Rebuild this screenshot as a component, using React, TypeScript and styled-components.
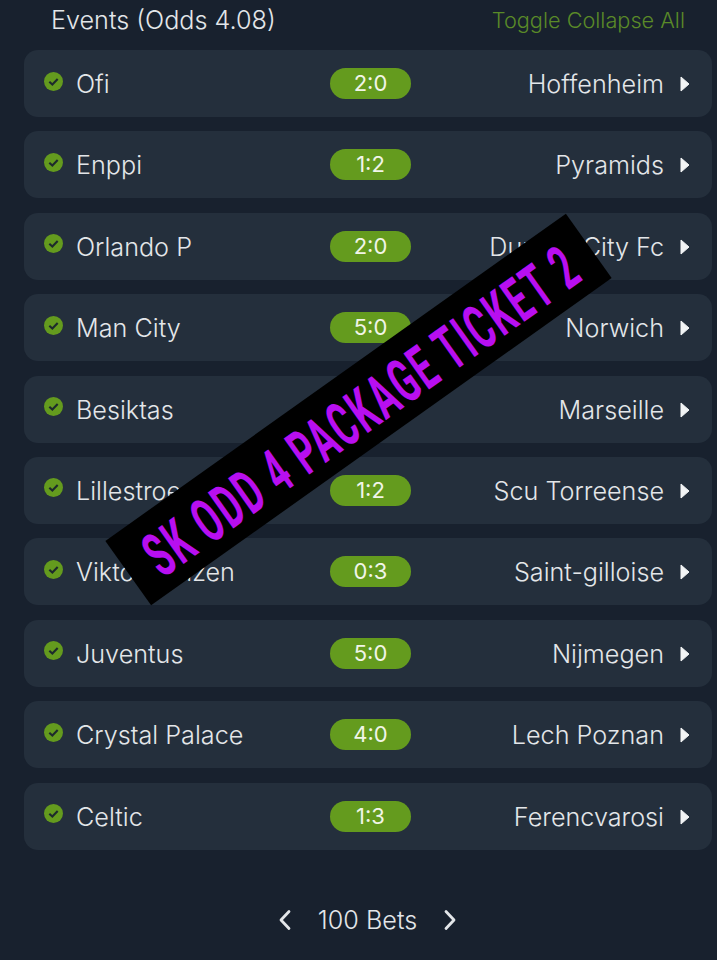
import styled, { createGlobalStyle } from "styled-components";

const GlobalStyle = createGlobalStyle`
  html, body {
    margin: 0;
    padding: 0;
    background: #18212e;
  }
  body {
    font-family: Inter, "Liberation Sans", sans-serif;
  }
`;

const Page = styled.div`
  position: relative;
  width: 717px;
  height: 960px;
  overflow: hidden;
  background: #18212e;
  color: #e3e6e9;
`;

const Header = styled.div`
  height: 50px;
  box-sizing: border-box;
  padding: 4px 32px 0 51px;
  display: flex;
  justify-content: space-between;
  align-items: flex-start;
`;

const Title = styled.div`
  font-size: 25.2px;
  font-weight: 300;
  line-height: 32px;
`;

const Toggle = styled.div`
  font-size: 21.7px;
  font-weight: 300;
  line-height: 32px;
  color: #5a8a28;
`;

const List = styled.div`
  display: flex;
  flex-direction: column;
  gap: 14.4px;
  margin: 0 5px 0 24px;
`;

const Row = styled.div`
  height: 67px;
  box-sizing: border-box;
  padding: 1px 15px 0 20px;
  border-radius: 14px;
  background: #242f3c;
  display: grid;
  grid-template-columns: 1fr 81px 1fr;
  align-items: center;
  font-size: 25.2px;
  font-weight: 300;
`;

const Home = styled.div`
  display: flex;
  align-items: center;
  gap: 13px;
`;

const CheckIcon = styled.svg`
  width: 19px;
  height: 19px;
  margin-bottom: 6px;
  flex: none;
`;

const Score = styled.div`
  height: 31px;
  margin-top: -1px;
  border-radius: 16px;
  background: #649b1e;
  color: #f1f5e8;
  font-size: 22px;
  font-weight: 400;
  line-height: 31px;
  text-align: center;
`;

const Away = styled.div`
  display: flex;
  align-items: center;
  justify-content: flex-end;
  gap: 16px;
  padding-right: 6px;
`;

const Caret = styled.svg`
  width: 10px;
  height: 16px;
  flex: none;
  margin-right: 1px;
`;

const Pager = styled.div`
  margin-top: 52px;
  margin-left: 18px;
  display: flex;
  justify-content: center;
  align-items: center;
  gap: 26px;
  font-size: 25.2px;
  font-weight: 300;
  line-height: 36px;
`;

const Chevron = styled.svg`
  width: 14px;
  height: 22px;
  flex: none;
`;

const Banner = styled.div`
  position: absolute;
  left: 76px;
  top: 369.5px;
  width: 565px;
  height: 79px;
  background: #000;
  transform: rotate(-35.4deg);
  display: flex;
  align-items: center;
  justify-content: center;
  overflow: hidden;
`;

const BannerText = styled.span`
  font-family: Roboto, "Liberation Sans", sans-serif;
  font-weight: 700;
  font-size: 62px;
  line-height: 79px;
  letter-spacing: 4px;
  color: #b80ff0;
  white-space: nowrap;
  transform: translate(2px, 3px) scaleX(0.558);
`;

const matches = [
  { home: "Ofi", score: "2:0", away: "Hoffenheim" },
  { home: "Enppi", score: "1:2", away: "Pyramids" },
  { home: "Orlando P", score: "2:0", away: "Durban City Fc" },
  { home: "Man City", score: "5:0", away: "Norwich" },
  { home: "Besiktas", away: "Marseille" },
  { home: "Lillestroem", score: "1:2", away: "Scu Torreense" },
  { home: "Viktoria Plzen", score: "0:3", away: "Saint-gilloise" },
  { home: "Juventus", score: "5:0", away: "Nijmegen" },
  { home: "Crystal Palace", score: "4:0", away: "Lech Poznan" },
  { home: "Celtic", score: "1:3", away: "Ferencvarosi" },
];

export default function App() {
  return (
    <>
      <GlobalStyle />
      <Page>
        <Header>
          <Title>Events (Odds 4.08)</Title>
          <Toggle>Toggle Collapse All</Toggle>
        </Header>
        <List>
          {matches.map((m) => (
            <Row key={m.home}>
              <Home>
                <CheckIcon viewBox="0 0 20 20">
                  <circle cx="10" cy="10" r="10" fill="#649b1e" />
                  <path
                    d="M5.6 10.2 8.8 13.2 14.4 7.4"
                    fill="none"
                    stroke="#1d2a2c"
                    strokeWidth="2.2"
                  />
                </CheckIcon>
                {m.home}
              </Home>
              {m.score ? <Score>{m.score}</Score> : <span />}
              <Away>
                {m.away}
                <Caret viewBox="0 0 10 16">
                  <path
                    d="M1 1 9 8 1 15Z"
                    fill="#f2f4f5"
                    stroke="#f2f4f5"
                    strokeWidth="1"
                    strokeLinejoin="round"
                  />
                </Caret>
              </Away>
            </Row>
          ))}
        </List>
        <Pager>
          <Chevron viewBox="0 0 14 22">
            <path
              d="M11 2.5 3 11 11 19.5"
              fill="none"
              stroke="#e3e6e9"
              strokeWidth="2.8"
              strokeLinecap="round"
              strokeLinejoin="round"
            />
          </Chevron>
          100 Bets
          <Chevron viewBox="0 0 14 22">
            <path
              d="M3 2.5 11 11 3 19.5"
              fill="none"
              stroke="#e3e6e9"
              strokeWidth="2.8"
              strokeLinecap="round"
              strokeLinejoin="round"
            />
          </Chevron>
        </Pager>
        <Banner>
          <BannerText>SK ODD 4 PACKAGE TICKET 2</BannerText>
        </Banner>
      </Page>
    </>
  );
}
